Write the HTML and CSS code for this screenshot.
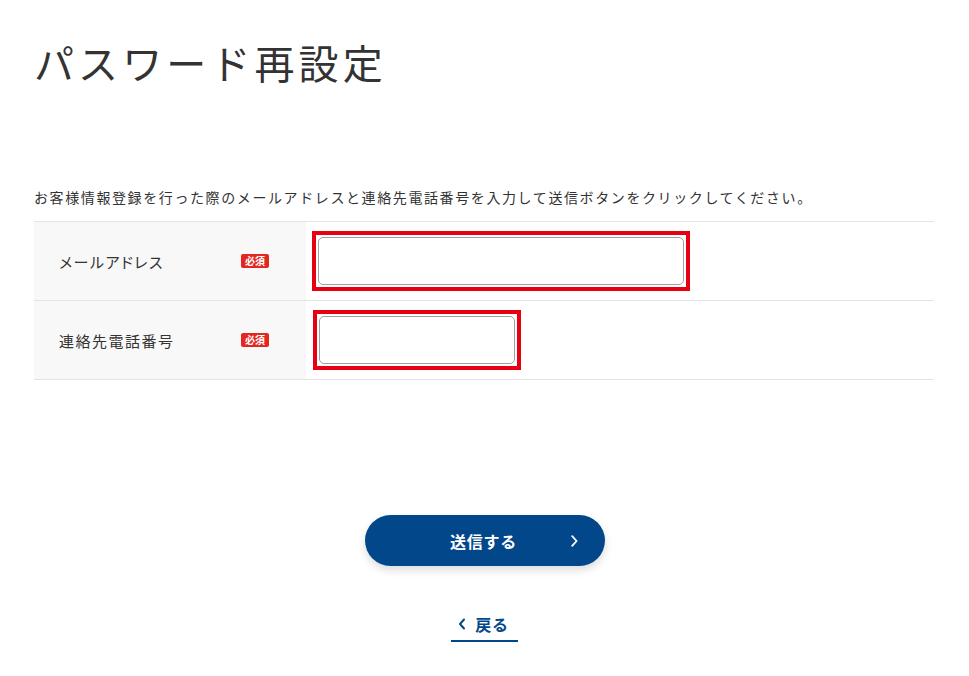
FILE: index.html
```html
<!DOCTYPE html>
<html lang="ja">
<head>
<meta charset="utf-8">
<title>パスワード再設定</title>
<link rel="stylesheet" href="styles.css">
</head>
<body>
<main class="page">
  <h1 class="title">パスワード再設定</h1>
  <p class="lead">お客様情報登録を行った際のメールアドレスと連絡先電話番号を入力して送信ボタンをクリックしてください。</p>
  <div class="form-table">
    <div class="row">
      <div class="label-cell"><span class="label">メールアドレス</span><span class="badge">必須</span></div>
      <div class="field-cell"><span class="error-frame"><input class="input input-wide" type="email"></span></div>
    </div>
    <div class="row">
      <div class="label-cell"><span class="label">連絡先電話番号</span><span class="badge">必須</span></div>
      <div class="field-cell"><span class="error-frame frame-narrow"><input class="input input-narrow" type="tel"></span></div>
    </div>
  </div>
  <div class="actions">
    <button class="submit" type="button"><span class="submit-text">送信する</span>
      <svg class="submit-arrow" width="7" height="12" viewBox="0 0 7 12"><path d="M1.2 1.2 L5.6 6 L1.2 10.8" fill="none" stroke="#fff" stroke-width="1.8" stroke-linecap="round" stroke-linejoin="round"/></svg>
    </button>
    <a class="back" href="#"><svg class="back-arrow" width="8" height="12" viewBox="0 0 8 12"><path d="M6 1.5 L2 6 L6 10.5" fill="none" stroke="#03478b" stroke-width="2" stroke-linecap="round" stroke-linejoin="round"/></svg><span>戻る</span></a>
  </div>
</main>
</body>
</html>
```

FILE: styles.css
```css
* { box-sizing: border-box; }
html, body { margin: 0; padding: 0; background: #fff; }
body {
  font-family: "Noto Sans CJK JP", "Noto Sans", sans-serif;
  color: #333;
}
.page {
  width: 900px;
  margin-left: 34px;
}
.title {
  margin: 29px 0 0;
  font-size: 40px;
  line-height: 66px;
  font-weight: 400;
  letter-spacing: 4.1px;
  color: #333;
}
.lead {
  margin: 90px 0 0;
  font-size: 14px;
  line-height: 24px;
  letter-spacing: 1.6px;
  color: #333;
}
.form-table {
  margin-top: 12px;
  border-top: 1px solid #e4e4e4;
}
.row {
  display: flex;
  height: 79px;
  border-bottom: 1px solid #e4e4e4;
}
.label-cell {
  width: 272px;
  flex: none;
  background: #f8f8f8;
  display: flex;
  align-items: center;
  justify-content: space-between;
  padding: 0 37px 0 25px;
}
.label {
  font-size: 15px;
  letter-spacing: 0.1em;
  color: #333;
  font-feature-settings: "palt";
}
.badge {
  display: inline-block;
  background: #e3261f;
  color: #fff;
  font-size: 10px;
  font-weight: 700;
  line-height: 14px;
  height: 14px;
  width: 28px;
  text-align: center;
  border-radius: 2px;
  letter-spacing: 0;
}
.field-cell {
  flex: 1;
  display: flex;
  align-items: center;
  padding-left: 6px;
}
.error-frame {
  display: inline-flex;
  border: 4px solid #e60012;
  padding: 2px;
  background: #fff;
}
.frame-narrow { margin-left: 1px; }
.input {
  display: block;
  height: 48px;
  border: 1px solid #a0a0a0;
  border-radius: 5px;
  background: #fff;
  font: inherit;
  padding: 0 10px;
  margin: 0;
  outline: none;
}
.input-wide { width: 366px; }
.input-narrow { width: 196px; }
.actions {
  display: flex;
  flex-direction: column;
  align-items: center;
  margin-top: 135px;
  margin-left: -34px;
  width: 969px;
}
.submit {
  position: relative;
  width: 240px;
  height: 51px;
  border: none;
  border-radius: 26px;
  background: #03478b;
  color: #fff;
  font-family: inherit;
  font-size: 16px;
  font-weight: 700;
  letter-spacing: 0.05em;
  box-shadow: 0 4px 8px rgba(0,0,0,0.14);
  display: flex;
  align-items: center;
  justify-content: center;
  padding: 0;
}
.submit-text { margin-left: -2px; }
.submit-arrow {
  position: absolute;
  right: 27px;
  top: 20px;
}
.back {
  margin-top: 46px;
  display: flex;
  align-items: center;
  gap: 9px;
  color: #03478b;
  text-decoration: none;
  font-size: 16px;
  font-weight: 700;
  letter-spacing: 0.05em;
  padding: 0 9px 4px 7px;
  border-bottom: 2px solid #03478b;
  line-height: 24px;
}
```
